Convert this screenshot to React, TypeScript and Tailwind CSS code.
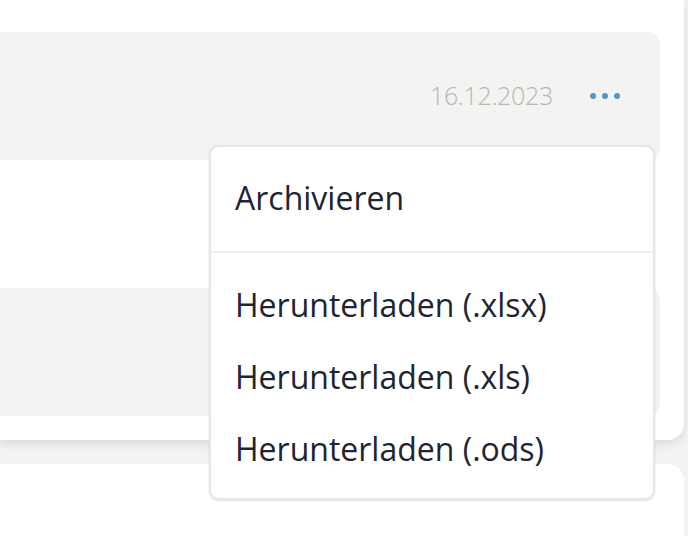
const ITEMS = ['Herunterladen (.xlsx)', 'Herunterladen (.xls)', 'Herunterladen (.ods)']

function Dots() {
  return (
    <div className="flex items-center gap-[6px]">
      <span className="w-[6px] h-[6px] rounded-full bg-[#4a97cd]" />
      <span className="w-[6px] h-[6px] rounded-full bg-[#4a97cd]" />
      <span className="w-[6px] h-[6px] rounded-full bg-[#4a97cd]" />
    </div>
  )
}

export default function App() {
  return (
    <div className="relative w-[688px] h-[536px] overflow-hidden bg-[#f3f3f3]" style={{ fontFamily: '"Open Sans", "Liberation Sans", sans-serif' }}>
      {/* Tabelle */}
      <div className="w-[684px] bg-white rounded-br-[16px] pr-[24px] shadow-[0_4px_8px_rgba(0,0,0,0.10)]">
        <div className="h-[32px]" />
        <div className="h-[128px] bg-[#f3f3f2] rounded-r-[12px] flex items-center justify-end pr-[40px] gap-[37px]">
          <span className="text-[25px] font-light text-[#b8b5b3] tracking-[-0.3px]">16.12.2023</span>
          <Dots />
        </div>
        <div className="h-[128px]" />
        <div className="h-[128px] bg-[#f3f3f2] rounded-r-[12px]" />
        <div className="h-[24px]" />
      </div>

      <div className="mt-[24px] w-[684px] h-[200px] bg-white rounded-tr-[16px]" />

      {/* Menü */}
      <div className="absolute left-[209px] top-[145px] w-[446px] bg-white border-2 border-[#e3e8ef] rounded-[10px] shadow-sm text-[#1f2432] text-[32px]">
        <div className="pt-[15px] pb-[17px]">
          <div className="h-[72px] flex items-center px-[24px]">Archivieren</div>
        </div>
        <div className="h-[2px] bg-[#e9edf2]" />
        <div className="pt-[16px] pb-[13px]">
          {ITEMS.map(item => (
            <div key={item} className="h-[72px] flex items-center px-[24px]">{item}</div>
          ))}
        </div>
      </div>
    </div>
  )
}
